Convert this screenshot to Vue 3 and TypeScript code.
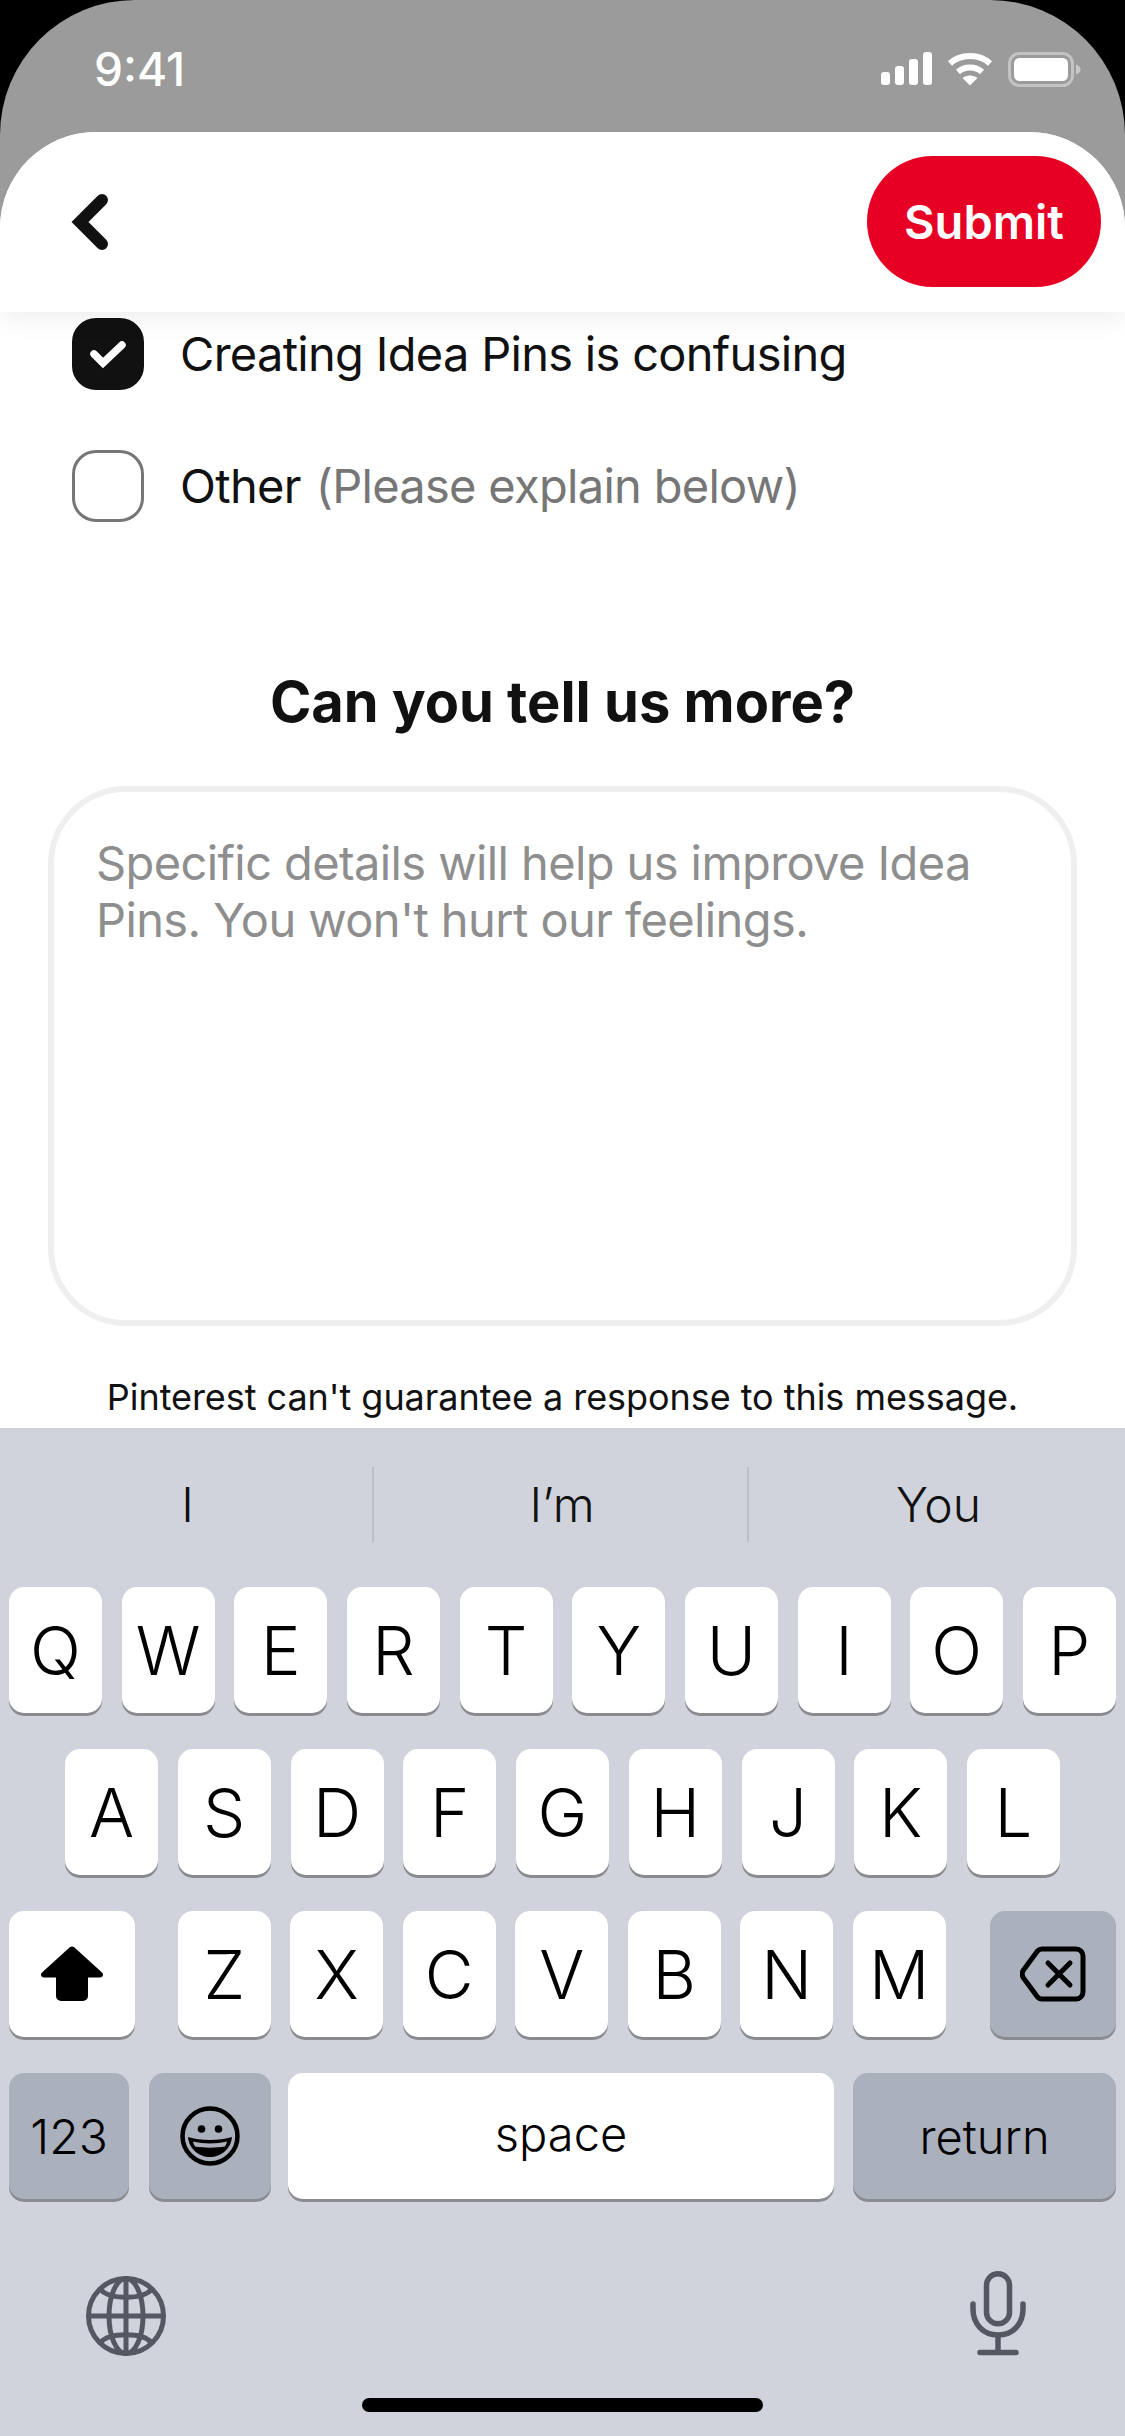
<template>
  <div class="screen">
    <div class="status-bar">
      <span class="time">9:41</span>
      <div class="status-icons">
        <svg width="52" height="34" viewBox="0 0 52 34" fill="#fff">
          <rect x="1" y="20" width="9" height="13" rx="3" />
          <rect x="15" y="14" width="9" height="19" rx="3" />
          <rect x="29" y="7" width="9" height="26" rx="3" />
          <rect x="43" y="0" width="9" height="33" rx="3" />
        </svg>
        <svg width="46" height="34" viewBox="0 0 46 34" fill="none" stroke="#fff" stroke-width="6">
          <path d="M3 11.5C13.5 1.5 32.5 1.5 43 11.5" />
          <path d="M11 20C17.5 14 28.5 14 35 20" />
          <path d="M23 33.5L15.5 26C19.5 22.5 26.5 22.5 30.5 26Z" fill="#fff" stroke="none" />
        </svg>
        <svg width="74" height="36" viewBox="0 0 74 36" fill="none">
          <rect x="1.5" y="1.5" width="63" height="32" rx="10" stroke="#fff" stroke-opacity="0.4" stroke-width="3" />
          <rect x="6" y="6" width="54" height="23" rx="5.5" fill="#fff" />
          <path d="M68 12.5C71 13.5 72.5 15.3 72.5 17.5S71 21.5 68 22.5Z" fill="#fff" fill-opacity="0.45" />
        </svg>
      </div>
    </div>

    <div class="sheet">
      <header class="sheet-head">
        <svg width="40" height="56" viewBox="0 0 40 56" fill="none" stroke="#111" stroke-width="12" stroke-linecap="round" stroke-linejoin="miter">
          <path d="M32 6L10 28L32 50" />
        </svg>
        <button class="submit">Submit</button>
      </header>

      <div class="content">
        <div class="options">
          <div v-for="o in options" :key="o.label" class="option">
            <span class="box" :class="{ checked: o.checked }">
              <svg v-if="o.checked" width="38" height="30" viewBox="0 0 38 30" fill="none" stroke="#fff" stroke-width="7.500" stroke-linecap="round">
                <path d="M5 15L14 24L33 6" />
              </svg>
            </span>
            <span class="option-label">{{ o.label }}<span v-if="o.hint" class="hint">{{ o.hint }}</span></span>
          </div>
        </div>

        <h2 class="more">Can you tell us more?</h2>
        <div class="textbox">Specific details will help us improve Idea Pins. You won't hurt our feelings.</div>
        <p class="note">Pinterest can't guarantee a response to this message.</p>
      </div>
    </div>

    <div class="keyboard">
      <div class="predict">
        <span v-for="w in predictions" :key="w" class="predict-word">{{ w }}</span>
      </div>

      <div class="key-row">
        <button v-for="k in rowOne" :key="k" class="key">{{ k }}</button>
      </div>
      <div class="key-row row-two">
        <button v-for="k in rowTwo" :key="k" class="key">{{ k }}</button>
      </div>
      <div class="key-row row-three">
        <button class="key shift">
          <svg width="64" height="56" viewBox="0 0 64 56" fill="#000">
            <path d="M29.5 1.5a4 4 0 0 1 5 0L62 26.500c2 2 1 5-2 5H48V50a5 5 0 0 1-5 5H21a5 5 0 0 1-5-5V31.500H4c-3 0-4-3-2-5Z" />
          </svg>
        </button>
        <div class="letters">
          <button v-for="k in rowThree" :key="k" class="key">{{ k }}</button>
        </div>
        <button class="key dark shift">
          <svg width="66" height="56" viewBox="0 0 66 56" fill="none" stroke="#000" stroke-width="5" stroke-linecap="round" stroke-linejoin="round">
            <path d="M22 3H56a7 7 0 0 1 7 7V46a7 7 0 0 1-7 7H22a6 6 0 0 1-4.500-2L3.500 32a7 7 0 0 1 0-8L17.500 5a6 6 0 0 1 4.500-2Z" />
            <path d="M28 17L50 39M50 17L28 39" />
          </svg>
        </button>
      </div>
      <div class="key-row row-four">
        <button class="key dark num">123</button>
        <button class="key dark emoji">
          <svg width="60" height="60" viewBox="0 0 60 60">
            <circle cx="30" cy="30" r="27.500" fill="none" stroke="#000" stroke-width="4.500" />
            <circle cx="21.500" cy="23" r="3.800" fill="#000" />
            <circle cx="38.500" cy="23" r="3.800" fill="#000" />
            <path d="M8 31C20 35 40 35 52 31C51 43 41 51 30 51S9 43 8 31Z" fill="#000" />
            <path d="M13 35.500C24 38 36 38 47 35.500C46.500 37.500 46 39 45 40.500C36 42 24 42 15 40.500C14 39 13.500 37.500 13 35.500Z" fill="#aab0bc" />
          </svg>
        </button>
        <button class="key space">space</button>
        <button class="key dark return">return</button>
      </div>

      <div class="kb-tools">
        <svg width="82" height="82" viewBox="0 0 82 82" fill="none" stroke="#545863" stroke-width="5">
          <circle cx="41" cy="41" r="37.500" />
          <ellipse cx="41" cy="41" rx="17" ry="37.500" />
          <path d="M41 3.500V78.500M3.500 41H78.500" />
          <path d="M15 14C24 25 58 25 67 14" />
          <path d="M15 68C24 57 58 57 67 68" />
        </svg>
        <svg class="mic" width="56" height="85" viewBox="0 0 56 85" fill="none" stroke="#545863" stroke-width="5.500" stroke-linecap="round">
          <rect x="16.500" y="2.750" width="23" height="50" rx="11.500" />
          <path d="M3 33V38C3 53 13 64 28 64S53 53 53 38V33" />
          <path d="M28 64V80" stroke-linecap="butt" />
          <path d="M10 81.500H46" />
        </svg>
      </div>
      <div class="home-bar"></div>
    </div>
  </div>
</template>

<script setup lang="ts">
interface Option {
  label: string
  hint?: string
  checked: boolean
}

const options: Option[] = [
  { label: 'Creating Idea Pins is confusing', checked: true },
  { label: 'Other', hint: '(Please explain below)', checked: false }
]

const predictions = ['I', 'I’m', 'You']
const rowOne = 'QWERTYUIOP'.split('')
const rowTwo = 'ASDFGHJKL'.split('')
const rowThree = 'ZXCVBNM'.split('')
</script>

<style>
html,
body {
  margin: 0;
  background: #000;
}
</style>

<style scoped>
.screen {
  width: 1125px;
  height: 2436px;
  display: flex;
  flex-direction: column;
  background: #9b9b9b;
  border-radius: 135px 135px 0 0;
  overflow: hidden;
  font-family: Inter, "Liberation Sans", sans-serif;
  color: #111;
}

.status-bar {
  height: 132px;
  flex: none;
  display: flex;
  justify-content: space-between;
  padding: 52px 43px 0 94px;
  box-sizing: border-box;
  color: #fff;
}

.time {
  font-size: 46px;
  line-height: 34px;
  font-weight: 500;
}

.status-icons {
  display: flex;
  align-items: flex-start;
  gap: 15px;
}

.sheet {
  flex: 1;
  min-height: 0;
  display: flex;
  flex-direction: column;
  background: #fff;
  border-radius: 96px 96px 0 0;
  overflow: hidden;
}

.sheet-head {
  height: 180px;
  flex: none;
  display: flex;
  align-items: center;
  justify-content: space-between;
  padding: 0 24px 0 70px;
  background: #fff;
  box-shadow: 0 0 30px rgba(0, 0, 0, 0.1);
  position: relative;
  z-index: 1;
}

.submit {
  width: 234px;
  height: 131px;
  margin-top: -1px;
  border: none;
  border-radius: 66px;
  background: #e60023;
  color: #fff;
  font: 600 47px Inter, "Liberation Sans", sans-serif;
  padding: 0;
}

.content {
  flex: 1;
  display: flex;
  flex-direction: column;
  align-items: center;
  padding: 6px 48px 0;
}

.options {
  width: 100%;
  display: flex;
  flex-direction: column;
  gap: 60px;
  padding-left: 24px;
  box-sizing: border-box;
}

.option {
  display: flex;
  align-items: center;
  gap: 36px;
  height: 72px;
}

.box {
  width: 72px;
  height: 72px;
  flex: none;
  box-sizing: border-box;
  border: 3px solid #767676;
  border-radius: 24px;
  display: flex;
  align-items: center;
  justify-content: center;
}

.box.checked {
  background: #111;
  border-color: #111;
}

.option-label {
  font-size: 47px;
  line-height: 72px;
  letter-spacing: -0.7px;
  color: #111;
}

.hint {
  margin-left: 15px;
  color: #767676;
}

.more {
  margin: 144px 0 0;
  font-size: 56px;
  line-height: 72px;
  font-weight: 700;
  color: #111;
}

.textbox {
  width: 100%;
  height: 540px;
  margin-top: 48px;
  box-sizing: border-box;
  border: 6px solid #efefef;
  border-radius: 78px;
  padding: 42px 42px;
  font-size: 47px;
  line-height: 57px;
  letter-spacing: -0.6px;
  color: #8e8e8e;
}

.note {
  margin: 49px 0 0;
  font-size: 36px;
  line-height: 44px;
  letter-spacing: -0.05px;
  color: #111;
  white-space: nowrap;
}

.keyboard {
  height: 1008px;
  flex: none;
  background: #d0d3dc;
  display: flex;
  flex-direction: column;
  padding: 0 9px;
  box-sizing: border-box;
}

.predict {
  height: 75px;
  margin: 39px -9px 45px;
  display: grid;
  grid-template-columns: 374px 375px 376px;
}

.predict-word {
  display: flex;
  align-items: center;
  justify-content: center;
  padding-left: 3px;
  font-size: 48px;
  font-weight: 350;
  color: #111;
  border-right: 2px solid #bcbfc8;
}

.predict-word:last-child {
  border-right: none;
}

.key-row {
  height: 126px;
  display: flex;
  justify-content: space-between;
  margin-bottom: 36px;
}

.row-two {
  padding: 0 56px;
}

.key {
  width: 93px;
  height: 126px;
  padding: 0;
  border: none;
  border-radius: 15px;
  background: #fff;
  box-shadow: 0 3px 0 #8a8b90;
  color: #000;
  font: 350 67px Inter, "Liberation Sans", sans-serif;
  display: flex;
  align-items: center;
  justify-content: center;
}

.key.dark {
  background: #aab0bc;
}

.letters {
  display: flex;
  gap: 19.500px;
  margin-right: 1.500px;
}

.shift {
  width: 126px;
}

.row-four {
  gap: 0;
}

.num {
  width: 120px;
  font-size: 48px;
}

.emoji {
  width: 122px;
  margin-left: 20px;
}

.space {
  width: 546px;
  margin-left: 17px;
  font-size: 47px;
  padding-bottom: 6px;
}

.return {
  width: 263px;
  margin-left: 19px;
  font-size: 47px;
}

.kb-tools {
  display: flex;
  justify-content: space-between;
  align-items: flex-start;
  padding: 0 90px 0 76px;
  margin-top: 40px;
}

.mic {
  margin-top: -4px;
}

.home-bar {
  width: 401px;
  height: 14px;
  margin: 41px auto 0;
  border-radius: 7px;
  background: #000;
}
</style>
